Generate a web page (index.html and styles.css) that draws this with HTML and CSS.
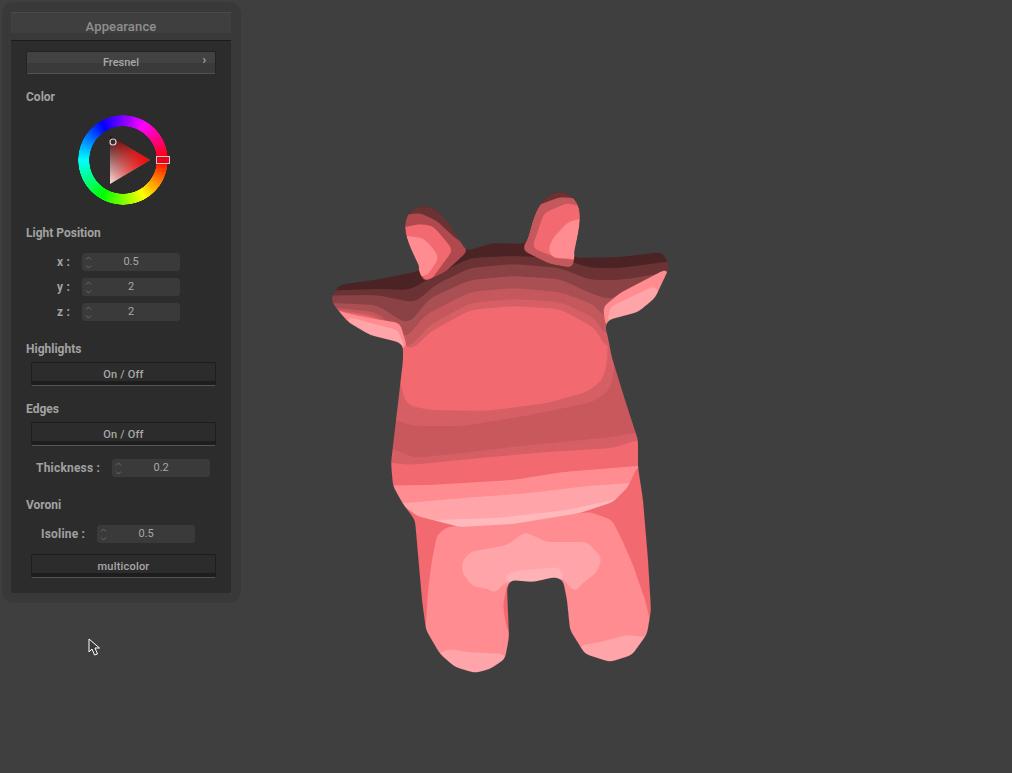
FILE: index.html
```html
<!DOCTYPE html>
<html lang="en">
<head>
<meta charset="utf-8">
<title>Appearance</title>
<link rel="stylesheet" href="styles.css">
</head>
<body>
<svg class="cow" viewBox="0 0 1012 773" width="1012" height="773" aria-hidden="true">
  <defs>
    <filter id="smooth" filterUnits="userSpaceOnUse" x="0" y="0" width="1012" height="773" color-interpolation-filters="sRGB">
      <feGaussianBlur stdDeviation="3"/>
      <feComponentTransfer><feFuncA type="linear" slope="8" intercept="-3.5"/></feComponentTransfer>
    </filter>
    <filter id="smooth2" filterUnits="userSpaceOnUse" x="0" y="0" width="1012" height="773" color-interpolation-filters="sRGB">
      <feGaussianBlur stdDeviation="6"/>
      <feComponentTransfer><feFuncA type="linear" slope="16" intercept="-7.5"/></feComponentTransfer>
    </filter>
    <mask id="sil" maskUnits="userSpaceOnUse" x="0" y="0" width="1012" height="773"><path fill="#fff" d="M331 298 L339 285 L380 279 L420 271 L423 275 C415 255 404 240 405 224 C406 211 416 205 426 206 C440 207 453 228 466 251 L493 243 L525 244 L528 238 C533 220 537 198 556 192 C571 190 581 203 580 217 C580 230 575 245 573 258 L620 257 L662 252 L670 266 L655 298 L638 312 L608 320 L605 327 L607 333 L612 358 L625 400 L638 440 L638 467 L643 500 L648 560 L651 610 L647 634 L632 655 L610 662 L585 654 L570 630 L567 600 L563 580 L555 577 L533 582 L510 580 L507 588 L509 637 L505 659 L490 669 L475 673 L455 667 L440 654 L426 630 L422 600 L415 520 L403 504 L393 486 L391 463 L394 437 L399 395 L403 360 L403 345 L398 342 L370 335 L348 322 L333 304 Z"/></mask>
    <mask id="belly" maskUnits="userSpaceOnUse" x="0" y="0" width="1012" height="773"><path fill="#fff" d="M370 320 L670 320 L670 460 L637 467 L628 487 L613 502 L580 513 L513 524 L460 527 L417 516 L400 503 L385 485 L370 463 Z"/></mask>
    <mask id="hornL" maskUnits="userSpaceOnUse" x="0" y="0" width="1012" height="773"><path fill="#fff" d="M423 282 C415 255 404 240 405 224 C406 211 416 205 426 206 C440 207 453 228 468 251 L445 272 Z"/></mask>
    <mask id="hornR" maskUnits="userSpaceOnUse" x="0" y="0" width="1012" height="773"><path fill="#fff" d="M522 250 L528 238 C533 220 537 198 556 192 C571 190 581 203 580 217 C580 230 575 245 573 268 L550 264 Z"/></mask>
  </defs>
  <g mask="url(#sil)">
    <rect x="320" y="190" width="360" height="500" fill="#f2696f"/>
    <path fill="#ff8c90" d="M426 625 L428 590 L432 560 L437 535 L447 527 L590 512 L612 520 L622 540 L633 565 L645 600 L655 640 L620 680 L450 690 L420 650 Z"/>
    <path fill="#f2696f" d="M508 580 L503 605 L506 625 L512 645 L516 590 Z"/>
    <path fill="#f2696f" d="M560 575 L566 620 L574 642 L560 600 Z"/>
    <path fill="#ffa5a9" d="M462 562 L470 552 L507 545 L525 532 L547 542 L587 542 L602 558 L597 572 L577 588 L582 594 L570 588 L563 578 L507 582 L500 587 L492 598 L493 590 L472 586 L462 572 Z"/>
    <path fill="#ffb2b6" d="M503 575 L517 571 L560 567 L565 580 L533 584 L508 582 Z"/>
    <path fill="#ffa5a9" d="M436 654 L450 649 L467 652 L506 654 L505 690 L440 690 Z"/>
    <path fill="#ffa5a9" d="M578 646 L600 642 L627 635 L652 638 L645 680 L585 680 Z"/>
    <g mask="url(#belly)">
      <rect x="370" y="320" width="300" height="220" fill="#ffb8bb"/>
      <path class="band" fill="#ffa5a9" d="M350 516 L437 520 L497 518 L567 510 L613 500 L690 470 L690 280 L350 280 Z"/>
      <path class="band" fill="#ff8c90" d="M350 505 L407 503 L463 498 L530 493 L587 486 L632 483 L690 483 L690 280 L350 280 Z"/>
      <path class="band" fill="#f2696f" d="M350 486 L430 485 L513 480 L563 472 L637 466 L690 466 L690 280 L350 280 Z"/>
      <path class="band" fill="#d65f65" d="M350 458 L410 465 L480 458 L547 452 L613 448 L637 440 L690 438 L690 280 L350 280 Z"/>
      <path class="band" fill="#c9585d" d="M350 440 L397 450 L413 458 L463 453 L530 445 L613 437 L633 433 L690 430 L690 280 L350 280 Z"/>
      <path class="band" fill="#d65f65" d="M350 412 L397 420 L412 426 L463 426 L530 415 L593 402 L610 390 L614 370 L625 280 L350 280 Z"/>
      <path class="band" fill="#f2696f" d="M350 345 L400 380 L406 405 L430 410 L487 411 L547 403 L587 392 L603 380 L607 363 L610 280 L350 280 Z"/>
    </g>
    <path class="band" fill="#d65f65" d="M290 311 L345 312 L377 318 L410 352 L430 332 L470 310 L513 306 L560 309 L595 328 L610 355 L628 312 L710 286 L710 150 L290 150 Z"/>
    <path class="band" fill="#c4585c" d="M290 309 L340 310 L377 316 L407 350 L430 325 L470 303 L513 299 L560 302 L595 318 L607 340 L625 308 L710 284 L710 150 L290 150 Z"/>
    <path class="band" fill="#aa4f53" d="M290 307 L338 308 L377 312 L405 340 L425 315 L470 292 L513 288 L560 292 L595 305 L605 320 L625 300 L710 280 L710 150 L290 150 Z"/>
    <path class="band" fill="#8a4245" d="M290 301 L333 303 L377 305 L408 325 L430 298 L470 280 L513 276 L560 279 L590 293 L610 300 L640 285 L710 270 L710 150 L290 150 Z"/>
    <path class="band" fill="#6b3234" d="M290 296 L377 295 L415 303 L435 285 L470 268 L513 264 L560 268 L590 280 L620 280 L710 266 L710 150 L290 150 Z"/>
    <path class="band" fill="#4c2325" d="M290 292 L377 289 L410 290 L430 278 L470 258 L513 256 L560 258 L590 268 L620 268 L710 256 L710 150 L290 150 Z"/>
    <path fill="#ff8c90" d="M342 312 L363 317 L400 323 L408 350 L370 340 L345 330 L330 304 Z"/>
    <path fill="#ffa5a9" d="M346 316 L370 323 L398 330 L406 350 L370 342 L350 328 Z"/>
    <path fill="#ff8c90" d="M668 268 L620 293 L603 307 L606 328 L645 318 L670 295 Z"/>
    <path fill="#ffa5a9" d="M656 285 L610 307 L607 325 L640 316 L660 300 Z"/>
    <g mask="url(#hornL)">
      <rect x="400" y="200" width="70" height="85" fill="#6b3234"/>
      <path fill="#b0494e" d="M395 216 L420 213 L437 221 L455 238 L478 253 L430 290 L395 240 Z"/>
      <path fill="#f2696f" d="M395 229 L420 224 L433 226 L445 240 L453 250 L428 284 L395 240 Z"/>
      <path fill="#ff8c90" d="M400 235 L423 238 L432 247 L439 258 L427 276 L415 276 Z"/>
    </g>
    <g mask="url(#hornR)">
      <rect x="515" y="180" width="70" height="90" fill="#6b3234"/>
      <path fill="#c4585c" d="M520 252 L536 206 L560 197 L595 200 L595 272 L550 264 Z"/>
      <path fill="#f2696f" d="M532 248 L544 213 L567 203 L595 210 L595 264 L552 256 Z"/>
      <path fill="#ff8c90" d="M548 250 L553 238 L568 222 L595 215 L595 260 L553 258 Z"/>
    </g>
  </g>
</svg>

<aside class="panel">
  <div class="panel-inner">
    <header class="panel-title">Appearance</header>
    <div class="body">
      <button class="select">Fresnel<span class="chevron">›</span></button>
      <h2 class="heading heading-color">Color</h2>
      <div class="picker">
        <div class="wheel"></div>
        <svg class="picker-marks" viewBox="0 0 93 92" width="93" height="92" aria-hidden="true">
          <defs>
            <linearGradient id="tone" x1="0" y1="22" x2="0" y2="70" gradientUnits="userSpaceOnUse">
              <stop offset="0" stop-color="#200"/>
              <stop offset="1" stop-color="#fff"/>
            </linearGradient>
            <linearGradient id="hue" x1="32" y1="0" x2="72" y2="0" gradientUnits="userSpaceOnUse">
              <stop offset="0" stop-color="#f00" stop-opacity="0.12"/>
              <stop offset="1" stop-color="#f00"/>
            </linearGradient>
          </defs>
          <polygon points="32,22 72,46 32,70" fill="url(#tone)"/>
          <polygon points="32,22 72,46 32,70" fill="url(#hue)"/>
          <circle cx="35" cy="28" r="3" fill="#2c2c2c" stroke="#d8d0d0" stroke-width="1.2"/>
          <rect x="78.5" y="42.5" width="13" height="7" fill="#e8001a" stroke="#d8c8c8" stroke-width="1"/>
        </svg>
      </div>
      <h2 class="heading heading-light">Light Position</h2>
      <div class="row row-axis row-first">
        <span class="row-label">x :</span>
        <div class="spinner"><svg class="arrows" viewBox="0 0 7 13" width="7" height="13" aria-hidden="true"><path d="M1 3.5 L3.5 1 L6 3.5 M1 9.5 L3.5 12 L6 9.5"/></svg><span class="value">0.5</span></div>
      </div>
      <div class="row row-axis">
        <span class="row-label">y :</span>
        <div class="spinner"><svg class="arrows" viewBox="0 0 7 13" width="7" height="13" aria-hidden="true"><path d="M1 3.5 L3.5 1 L6 3.5 M1 9.5 L3.5 12 L6 9.5"/></svg><span class="value">2</span></div>
      </div>
      <div class="row row-axis">
        <span class="row-label">z :</span>
        <div class="spinner"><svg class="arrows" viewBox="0 0 7 13" width="7" height="13" aria-hidden="true"><path d="M1 3.5 L3.5 1 L6 3.5 M1 9.5 L3.5 12 L6 9.5"/></svg><span class="value">2</span></div>
      </div>
      <h2 class="heading heading-light">Highlights</h2>
      <button class="toggle toggle-high">On / Off</button>
      <h2 class="heading heading-edges">Edges</h2>
      <button class="toggle toggle-high">On / Off</button>
      <div class="row row-thick">
        <span class="row-label">Thickness :</span>
        <div class="spinner"><svg class="arrows" viewBox="0 0 7 13" width="7" height="13" aria-hidden="true"><path d="M1 3.5 L3.5 1 L6 3.5 M1 9.5 L3.5 12 L6 9.5"/></svg><span class="value">0.2</span></div>
      </div>
      <h2 class="heading heading-light">Voroni</h2>
      <div class="row row-iso">
        <span class="row-label">Isoline :</span>
        <div class="spinner"><svg class="arrows" viewBox="0 0 7 13" width="7" height="13" aria-hidden="true"><path d="M1 3.5 L3.5 1 L6 3.5 M1 9.5 L3.5 12 L6 9.5"/></svg><span class="value">0.5</span></div>
      </div>
      <button class="toggle toggle-multi">multicolor</button>
    </div>
  </div>
</aside>

<svg class="cursor" viewBox="0 0 13 19" width="13" height="19" aria-hidden="true">
  <path d="M1 1 L1 14 L4 11 L6.5 17 L9.5 16 L7 10 L11.5 10 Z" fill="#3a3a3a" stroke="#fff" stroke-width="1"/>
</svg>
</body>
</html>
```

FILE: styles.css
```css
* { box-sizing: border-box; }

html, body {
  margin: 0;
  height: 100%;
}

body {
  position: relative;
  width: 1012px;
  height: 773px;
  overflow: hidden;
  background: #3f3f3f;
  font-family: Roboto, "Liberation Sans", sans-serif;
  padding: 2px;
}

.cow {
  position: absolute;
  left: 0;
  top: 0;
}

.cow path {
  filter: url(#smooth);
}

.cow .band {
  filter: url(#smooth2);
}

.cursor {
  position: absolute;
  left: 88px;
  top: 638px;
}

.panel {
  position: relative;
  width: 239px;
  height: 601px;
  padding: 10px 10px 10px 9px;
  background: #393939;
  border-radius: 12px;
}

.panel-inner {
  height: 581px;
  background: #2c2c2c;
  border-radius: 2px;
}

.panel-title {
  height: 29px;
  padding-top: 5px;
  text-align: center;
  font-size: 13px;
  line-height: 17px;
  font-weight: 500;
  letter-spacing: 0.15px;
  color: #8f8f8f;
  background: linear-gradient(#3f3f3f 0, #3f3f3f 20px, #393939 20px, #393939 28px);
  border-top: 1px solid #4b4b4b;
  border-bottom: 1px solid #1b1b1b;
}

.body {
  padding: 10px 15px 14px;
}

.select {
  position: relative;
  display: block;
  width: 190px;
  height: 23px;
  padding: 1px 0 0;
  border: 1px solid #232323;
  border-bottom-color: #525252;
  border-radius: 2px;
  background: linear-gradient(#424242 0, #424242 50%, #3a3a3a 50%, #3a3a3a 100%);
  color: #a8a8a8;
  font: 500 11px/20px Roboto, "Liberation Sans", sans-serif;
}

.chevron {
  position: absolute;
  right: 9px;
  top: -2px;
  font-size: 12px;
  color: #b0b0b0;
}

.heading {
  margin: 0;
  height: 14px;
  font-size: 12px;
  line-height: 14px;
  font-weight: 700;
  color: #a2a2a2;
}

.heading-color { margin-top: 16px; }
.heading-light { margin-top: 21px; }
.heading-edges { margin-top: 16px; }

.picker {
  position: relative;
  width: 93px;
  height: 92px;
  margin: 10px 0 -1px 52px;
}

.wheel {
  position: absolute;
  left: 0;
  top: 1px;
  width: 90px;
  height: 90px;
  border-radius: 50%;
  background: conic-gradient(from 90deg, #f00, #ff0, #0f0, #0ff, #00f, #f0f, #f00);
  -webkit-mask: radial-gradient(circle, transparent 33.5px, #000 34px, #000 44.5px, transparent 45px);
  mask: radial-gradient(circle, transparent 33.5px, #000 34px, #000 44.5px, transparent 45px);
}

.picker-marks {
  position: absolute;
  left: 0;
  top: 0;
}

.row {
  display: flex;
  align-items: center;
  gap: 12px;
  height: 18px;
}

.row-axis { margin-top: 7px; padding-left: 31px; }
.row-first { margin-top: 13px; }
.row-thick { margin-top: 13px; padding-left: 10px; }
.row-iso { margin-top: 13px; padding-left: 15px; }

.row-label {
  font-size: 12px;
  line-height: 14px;
  font-weight: 700;
  letter-spacing: 0.2px;
  color: #a0a0a0;
  white-space: nowrap;
}

.spinner {
  position: relative;
  width: 98px;
  height: 18px;
  background: #3a3a3a;
  border-radius: 3px;
  text-align: center;
  font-size: 11px;
  line-height: 18px;
  color: #a8a8a8;
}

.arrows {
  position: absolute;
  left: 3px;
  top: 3px;
  fill: none;
  stroke: #6a6a6a;
  stroke-width: 1;
}

.arrows path {
  filter: none;
}

.value { display: block; }

.toggle {
  display: block;
  width: 185px;
  height: 24px;
  margin-left: 5px;
  padding: 2px 0 0;
  border: 1px solid #1d1d1d;
  border-bottom-color: #555;
  border-radius: 2px;
  background: linear-gradient(#2c2c2c 0, #2c2c2c 18px, #1d1d1d 18px);
  color: #a8a8a8;
  font: 500 11px/18px Roboto, "Liberation Sans", sans-serif;
  letter-spacing: 0.2px;
}

.toggle-high { margin-top: 6px; }
.toggle-multi { margin-top: 11px; }
```
